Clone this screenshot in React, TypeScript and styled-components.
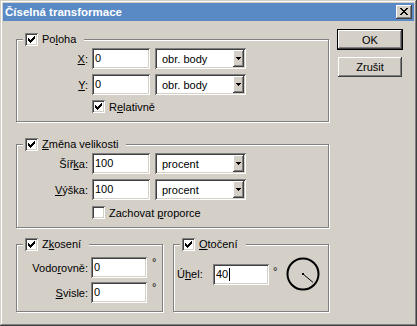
import React from "react";
import styled, { createGlobalStyle } from "styled-components";

const Global = createGlobalStyle`
  html, body { margin: 0; padding: 0; background: #d4d0c8; }
  body {
    font-family: "Liberation Sans", Arial, sans-serif;
    font-size: 11px;
    color: #000;
  }
  * { box-sizing: border-box; }
`;

const Window = styled.div`
  width: 417px;
  height: 326px;
  background: #d4d0c8;
  padding: 3px;
  box-shadow: inset -1px -1px #404040, inset 1px 1px #d4d0c8,
    inset -2px -2px #808080, inset 2px 2px #fff;
  display: flex;
  flex-direction: column;
`;

const TitleBar = styled.div`
  height: 18px;
  background: #5a8ac6;
  color: #fff;
  display: flex;
  align-items: center;
  justify-content: space-between;
  padding: 0 2px 0 2px;
`;

const Title = styled.span`
  font-weight: bold;
  font-size: 11.5px;
  letter-spacing: 0;
`;

const CloseBtn = styled.div`
  width: 16px;
  height: 14px;
  background: #d4d0c8;
  box-shadow: inset -1px -1px #404040, inset 1px 1px #fff,
    inset -2px -2px #808080, inset 2px 2px #d4d0c8;
  display: flex;
  align-items: center;
  justify-content: center;
  padding-bottom: 1px;
`;

const Body = styled.div`
  display: flex;
  align-items: flex-start;
  padding: 8px 0 0 13px;
`;

const LeftCol = styled.div`
  width: 313px;
  padding-top: 4px;
  display: flex;
  flex-direction: column;
`;

const RightCol = styled.div`
  margin-left: 8px;
  display: flex;
  flex-direction: column;
`;

const Group = styled.fieldset<{ $mt?: number; $w?: number; $pt: number; $pb: number; $pl?: number }>`
  margin: ${(p) => p.$mt ?? 0}px 0 0 0;
  width: ${(p) => (p.$w ? `${p.$w}px` : "auto")};
  min-width: 0;
  padding: ${(p) => p.$pt}px 0 ${(p) => p.$pb}px ${(p) => p.$pl ?? 0}px;
  border: 1px solid #808080;
  box-shadow: inset 1px 1px #fff, 1px 1px #fff;
`;

const Legend = styled.legend`
  margin-left: 6px;
  padding: 0 8px 0 2px;
  background: #d4d0c8;
  height: 13px;
  line-height: 13px;
  display: flex;
  align-items: center;
  gap: 4px;
`;

const GroupRow = styled.div`
  display: flex;
  margin-top: 10px;
  gap: 10px;
`;

const Rows = styled.div<{ $gap: number }>`
  display: flex;
  flex-direction: column;
  gap: ${(p) => p.$gap}px;
`;

const Row = styled.div<{ $indent?: number }>`
  display: flex;
  align-items: center;
  padding-left: ${(p) => p.$indent ?? 0}px;
`;

const FieldLabel = styled.span<{ $w: number; $gap: number; $align?: string }>`
  width: ${(p) => p.$w}px;
  margin-right: ${(p) => p.$gap}px;
  text-align: ${(p) => p.$align ?? "right"};
  white-space: nowrap;
`;

const sunken = `
  background: #fff;
  box-shadow: inset 1px 1px #808080, inset -1px -1px #fff,
    inset 2px 2px #404040, inset -2px -2px #d4d0c8;
`;

const TextBox = styled.div<{ $w: number }>`
  ${sunken}
  width: ${(p) => p.$w}px;
  height: 21px;
  padding: 0 3px;
  display: flex;
  align-items: center;
  line-height: 13px;
`;

const Caret = styled.span`
  display: inline-block;
  width: 1px;
  height: 13px;
  background: #000;
  margin-left: 1px;
`;

const Select = styled.div`
  ${sunken}
  width: 91px;
  height: 21px;
  margin-left: 5px;
  padding: 2px 2px 2px 7px;
  display: flex;
  align-items: center;
  justify-content: space-between;
`;

const DropBtn = styled.div`
  width: 11px;
  height: 17px;
  background: #d4d0c8;
  box-shadow: inset -1px -1px #404040, inset 1px 1px #fff,
    inset -2px -2px #808080;
  display: flex;
  align-items: center;
  justify-content: center;
`;

const Box = styled.span`
  ${sunken}
  width: 13px;
  height: 13px;
  display: inline-flex;
  align-items: center;
  justify-content: center;
  flex: none;
`;

const CheckRow = styled.div<{ $indent: number }>`
  display: flex;
  align-items: center;
  gap: 4px;
  height: 13px;
  padding-left: ${(p) => p.$indent}px;
`;

const Degree = styled.span<{ $ml: number }>`
  align-self: flex-start;
  margin-left: ${(p) => p.$ml}px;
  line-height: 11px;
`;

const Button = styled.div<{ $default?: boolean }>`
  width: ${(p) => (p.$default ? 66 : 64)}px;
  height: ${(p) => (p.$default ? 21 : 20)}px;
  margin: ${(p) => (p.$default ? "0" : "7px 0 0 1px")};
  display: flex;
  align-items: center;
  justify-content: center;
  background: #d4d0c8;
  border: ${(p) => (p.$default ? "1px solid #000" : "none")};
  box-shadow: inset -1px -1px #404040, inset 1px 1px #fff,
    inset -2px -2px #808080, inset 2px 2px #d4d0c8;
`;

const DialWrap = styled.div`
  margin-left: 9px;
  display: flex;
`;

const Check = ({ on }: { on: boolean }) => (
  <Box>
    {on && (
      <svg width="7" height="7" viewBox="0 0 7 7" shapeRendering="crispEdges">
        <rect x="0" y="2" width="1" height="3" fill="#000" />
        <rect x="1" y="3" width="1" height="3" fill="#000" />
        <rect x="2" y="4" width="1" height="3" fill="#000" />
        <rect x="3" y="3" width="1" height="3" fill="#000" />
        <rect x="4" y="2" width="1" height="3" fill="#000" />
        <rect x="5" y="1" width="1" height="3" fill="#000" />
        <rect x="6" y="0" width="1" height="3" fill="#000" />
      </svg>
    )}
  </Box>
);

const Arrow = () => (
  <svg width="5" height="3" viewBox="0 0 5 3" shapeRendering="crispEdges">
    <rect x="0" y="0" width="5" height="1" fill="#000" />
    <rect x="1" y="1" width="3" height="1" fill="#000" />
    <rect x="2" y="2" width="1" height="1" fill="#000" />
  </svg>
);

const CloseGlyph = () => (
  <svg width="8" height="7" viewBox="0 0 8 7" shapeRendering="crispEdges">
    <path
      d="M0 0h2v1h-2zM6 0h2v1h-2zM1 1h2v1h-2zM5 1h2v1h-2zM2 2h4v1h-4zM3 3h2v1h-2zM2 4h4v1h-4zM1 5h2v1h-2zM5 5h2v1h-2zM0 6h2v1h-2zM6 6h2v1h-2z"
      fill="#000"
    />
  </svg>
);

const Dial = ({ angle }: { angle: number }) => {
  const r = (angle * Math.PI) / 180;
  const cx = 17;
  const cy = 17;
  const len = 13;
  return (
    <svg width="34" height="34" viewBox="0 0 34 34">
      <circle cx={cx} cy={cy} r="15.5" fill="none" stroke="#000" strokeWidth="2" />
      <rect x={cx - 1} y={cy - 1} width="2" height="2" fill="#000" />
      <line
        x1={cx}
        y1={cy}
        x2={cx + len * Math.cos(r)}
        y2={cy + len * Math.sin(r)}
        stroke="#000"
        strokeWidth="1"
      />
    </svg>
  );
};

export default function App() {
  return (
    <>
      <Global />
      <Window>
        <TitleBar>
          <Title>Číselná transformace</Title>
          <CloseBtn>
            <CloseGlyph />
          </CloseBtn>
        </TitleBar>
        <Body>
          <LeftCol>
            <Group $pt={2} $pb={8}>
              <Legend>
                <Check on />
                <span>
                  Po<u>l</u>oha
                </span>
              </Legend>
              <Rows $gap={5}>
                <Row>
                  <FieldLabel $w={71} $gap={4}>
                    <u>X</u>:
                  </FieldLabel>
                  <TextBox $w={58}>0</TextBox>
                  <Select>
                    <span>obr. body</span>
                    <DropBtn>
                      <Arrow />
                    </DropBtn>
                  </Select>
                </Row>
                <Row>
                  <FieldLabel $w={71} $gap={4}>
                    <u>Y</u>:
                  </FieldLabel>
                  <TextBox $w={58}>0</TextBox>
                  <Select>
                    <span>obr. body</span>
                    <DropBtn>
                      <Arrow />
                    </DropBtn>
                  </Select>
                </Row>
                <CheckRow $indent={75}>
                  <Check on />
                  <span>
                    R<u>e</u>lativně
                  </span>
                </CheckRow>
              </Rows>
            </Group>

            <Group $mt={16} $pt={2} $pb={8}>
              <Legend>
                <Check on />
                <span>
                  <u>Z</u>měna velikosti
                </span>
              </Legend>
              <Rows $gap={5}>
                <Row>
                  <FieldLabel $w={71} $gap={4}>
                    Šíř<u>k</u>a:
                  </FieldLabel>
                  <TextBox $w={58}>100</TextBox>
                  <Select>
                    <span>procent</span>
                    <DropBtn>
                      <Arrow />
                    </DropBtn>
                  </Select>
                </Row>
                <Row>
                  <FieldLabel $w={71} $gap={4}>
                    <u>V</u>ýška:
                  </FieldLabel>
                  <TextBox $w={58}>100</TextBox>
                  <Select>
                    <span>procent</span>
                    <DropBtn>
                      <Arrow />
                    </DropBtn>
                  </Select>
                </Row>
                <CheckRow $indent={75} style={{ marginTop: 1 }}>
                  <Check on={false} />
                  <span>
                    Zachovat <u>p</u>roporce
                  </span>
                </CheckRow>
              </Rows>
            </Group>

            <GroupRow>
              <Group $w={147} $pt={6} $pb={8}>
                <Legend>
                  <Check on />
                  <span>
                    Z<u>k</u>osení
                  </span>
                </Legend>
                <Rows $gap={4}>
                  <Row>
                    <FieldLabel $w={71} $gap={3}>
                      Vodo<u>r</u>ovně:
                    </FieldLabel>
                    <TextBox $w={56}>0</TextBox>
                    <Degree $ml={5}>°</Degree>
                  </Row>
                  <Row>
                    <FieldLabel $w={71} $gap={3}>
                      <u>S</u>visle:
                    </FieldLabel>
                    <TextBox $w={56}>0</TextBox>
                    <Degree $ml={5}>°</Degree>
                  </Row>
                </Rows>
              </Group>
              <Group $w={156} $pt={6} $pb={8}>
                <Legend>
                  <Check on />
                  <span>
                    <u>O</u>točení
                  </span>
                </Legend>
                <Row $indent={3}>
                  <FieldLabel $w={36} $gap={0} $align="left">
                    Ú<u>h</u>el:
                  </FieldLabel>
                  <TextBox $w={56}>
                    40
                    <Caret />
                  </TextBox>
                  <Degree $ml={4} style={{ marginTop: 9 }}>°</Degree>
                  <DialWrap>
                    <Dial angle={40} />
                  </DialWrap>
                </Row>
              </Group>
            </GroupRow>
          </LeftCol>
          <RightCol>
            <Button $default>OK</Button>
            <Button>Zrušit</Button>
          </RightCol>
        </Body>
      </Window>
    </>
  );
}
